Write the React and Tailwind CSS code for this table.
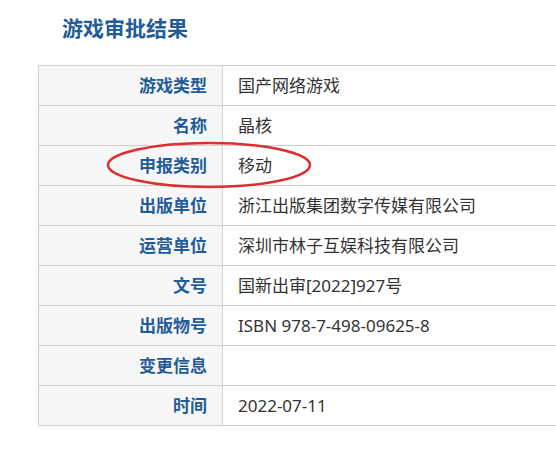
const rows = [
  ["游戏类型", "国产网络游戏"],
  ["名称", "晶核"],
  ["申报类别", "移动"],
  ["出版单位", "浙江出版集团数字传媒有限公司"],
  ["运营单位", "深圳市林子互娱科技有限公司"],
  ["文号", "国新出审[2022]927号"],
  ["出版物号", "ISBN 978-7-498-09625-8"],
  ["变更信息", ""],
  ["时间", "2022-07-11"],
];

export default function App() {
  return (
    <div
      className="w-[556px] h-[452px] overflow-hidden bg-white"
      style={{ fontFamily: '"Noto Sans", "Noto Sans CJK SC", sans-serif' }}
    >
      <h1 className="pl-[62px] pt-[13px] h-[65px] text-[21px] leading-[30px] font-bold text-[#1f5c99]">
        游戏审批结果
      </h1>
      <div className="relative pl-[38px]">
        <table className="w-[560px] border-collapse text-[17px]">
          <tbody>
            {rows.map(([label, value]) => (
              <tr key={label} className="h-10">
                <td className="w-[184px] border border-[#cfcfcf] bg-[#f7f7f7] pr-[15px] text-right font-bold text-[#1f5c99]">
                  {label}
                </td>
                <td className="border border-[#cfcfcf] pl-[15px] text-[#333]">
                  {value}
                </td>
              </tr>
            ))}
          </tbody>
        </table>
        {/* red annotation ring */}
        <svg
          className="absolute left-[104px] top-[75px] pointer-events-none"
          width="210"
          height="50"
          viewBox="0 0 210 50"
        >
          <ellipse
            cx="105"
            cy="25"
            rx="101"
            ry="22"
            fill="none"
            stroke="#dc2f2f"
            strokeWidth="2.5"
          />
        </svg>
      </div>
    </div>
  );
}
